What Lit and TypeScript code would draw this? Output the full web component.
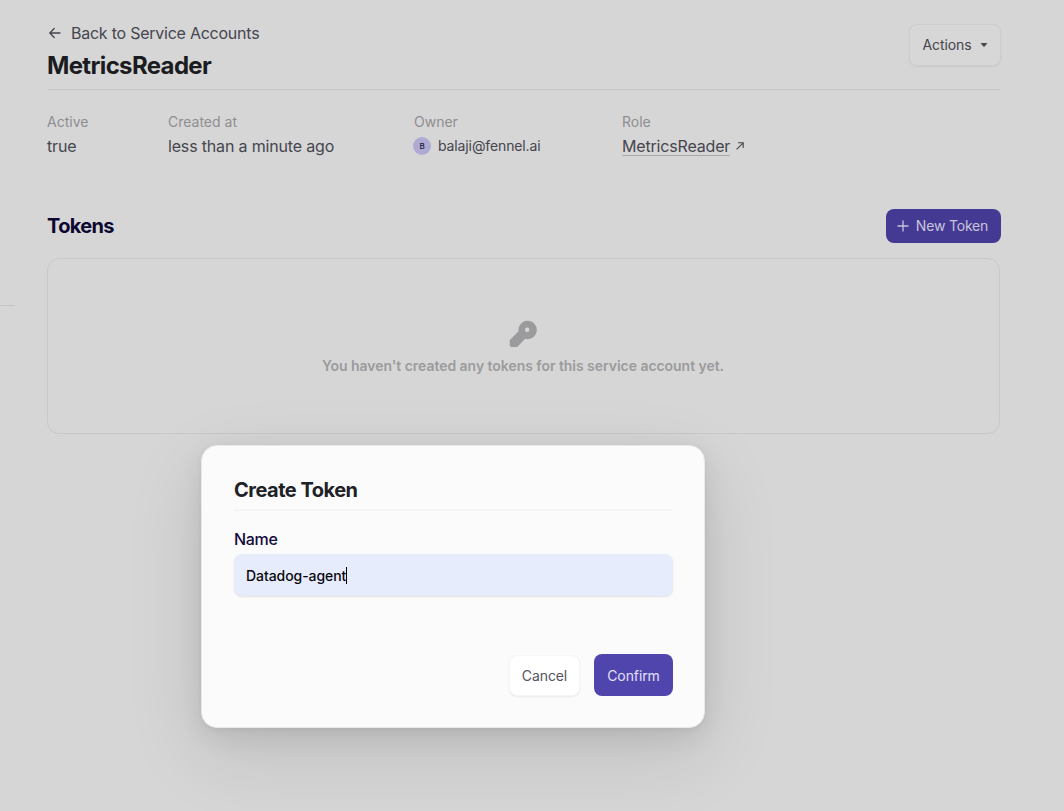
import { LitElement, html, css } from "lit";
import { customElement, property } from "lit/decorators.js";

@customElement("detail-field")
class DetailField extends LitElement {
  @property() label = "";
  static styles = css`
    :host { display: block; }
    .label { font-size: 14px; line-height: 20px; color: #8e8e91; }
    .value { display: flex; align-items: center; height: 24px; margin-top: 2px; font-size: 16px; letter-spacing: -0.17px; color: #45454e; white-space: nowrap; }
  `;
  render() {
    return html`<div class="label">${this.label}</div><div class="value"><slot></slot></div>`;
  }
}

@customElement("token-dialog")
class TokenDialog extends LitElement {
  static styles = css`
    :host { display: block; }
    .dialog {
      box-sizing: border-box; width: 504px; height: 283px; padding: 32px 31px 31px 32px;
      background: #fbfbfb; border-radius: 16px; border: 1px solid #e9e9e9;
      box-shadow: 0 25px 80px rgba(0, 0, 0, 0.11), 0 10px 30px rgba(0, 0, 0, 0.08), 0 2px 6px rgba(0, 0, 0, 0.05);
      display: flex; flex-direction: column;
    }
    h2 { margin: 0 1px 0 0; height: 31px; line-height: 24px; font-size: 20px; font-weight: 650; letter-spacing: -0.5px; color: #202127; border-bottom: 2px solid #f4f4f5; }
    label { margin: 17px 0 4px; line-height: 22px; font-size: 16px; font-weight: 500; color: #120b3b; letter-spacing: -0.3px; }
    .input {
      box-sizing: border-box; height: 42px; padding: 0 12px; display: flex; align-items: center;
      background: #e7ecfd; border: 1px solid #e8ebf8; border-radius: 8px; box-shadow: 0 1px 2px rgba(0, 0, 0, 0.1);
      font-size: 14px; font-weight: 500; letter-spacing: -0.07px; color: #08080c; text-indent: -1px;
    }
    .caret { width: 1px; height: 17px; background: #000; }
    .actions { margin-top: auto; display: flex; justify-content: flex-end; align-items: center; gap: 14px; height: 42px; }
    button { box-sizing: border-box; padding: 0; font: 420 14px Inter, sans-serif; border: 0; border-radius: 8px; }
    .cancel { width: 71px; height: 41px; background: #fff; color: #54545c; border: 1px solid #f5f5f6; box-shadow: 0 1px 2px rgba(0, 0, 0, 0.07); letter-spacing: -0.1px; }
    .confirm { width: 79px; height: 42px; background: #5044ad; color: #e4e1fb; letter-spacing: -0.1px; }
  `;
  render() {
    return html`
      <div class="dialog">
        <h2>Create Token</h2>
        <label>Name</label>
        <div class="input"><span>Datadog-agent</span><span class="caret"></span></div>
        <div class="actions">
          <button class="cancel">Cancel</button>
          <button class="confirm">Confirm</button>
        </div>
      </div>`;
  }
}

@customElement("app-root")
class AppRoot extends LitElement {
  static styles = css`
    :host {
      display: block; position: relative; width: 1064px; height: 811px; overflow: hidden;
      background: #d6d6d6; font-family: Inter, sans-serif; -webkit-font-smoothing: antialiased;
    }
    .layout { display: flex; height: 811px; }
    .rail { width: 15px; flex: none; padding-top: 305px; box-sizing: border-box; }
    .rail-line { height: 1px; background: #c5c5c6; }
    main { width: 954px; margin-left: 32px; padding-top: 22px; }
    header { display: flex; justify-content: space-between; height: 67px; border-bottom: 1px solid #c9c9ca; }
    .back { display: flex; align-items: center; gap: 8px; height: 22px; font-size: 16px; letter-spacing: -0.24px; color: #45454e; }
    h1 { margin: 6px 0 0; font-size: 24px; line-height: 32px; font-weight: 650; letter-spacing: -0.65px; color: #1b1c20; }
    svg { display: block; flex: none; }
    .menu {
      box-sizing: border-box; width: 92px; height: 42px; margin-top: 2px; display: flex; align-items: center; justify-content: center; gap: 8px;
      font: 420 14px Inter, sans-serif; letter-spacing: -0.08px; color: #45454e; background: #d7d7d7; border: 1px solid #cdcdce; border-radius: 8px; box-shadow: 0 1px 2px rgba(0, 0, 0, 0.06); padding: 0 0 1px;
    }
    .fields { display: grid; grid-template-columns: 121px 246px 208px auto; margin-top: 22px; height: 96px; }
    .avatar { width: 18px; height: 18px; margin: 0 7px 0 -1px; border-radius: 50%; background: #aeaad3; color: #1c1838; font-size: 8px; line-height: 18px; font-weight: 500; text-align: center; }
    .email { font-size: 14px; font-weight: 420; letter-spacing: -0.12px; padding-bottom: 1px; }
    .link { line-height: 18px; padding-top: 1px; border-bottom: 1px solid #a9a9ad; margin-right: 6px; }
    .section { display: flex; align-items: center; justify-content: space-between; height: 36px; }
    h3 { margin: 0; font-size: 20px; font-weight: 650; letter-spacing: -0.65px; color: #0d0830; }
    .new { width: 115px; height: 34px; padding: 0 2px 1px 0; box-sizing: border-box; display: flex; align-items: center; justify-content: center; gap: 7px; border: 0; border-radius: 8px; background: #453a93; color: #c8c5dc; font: 420 14px Inter, sans-serif; letter-spacing: -0.18px; }
    .empty {
      box-sizing: border-box; width: 953px; height: 176px; margin-top: 14px; border: 1px solid #c9c9ca; border-radius: 12px;
      display: flex; flex-direction: column; align-items: center; padding: 61px 1px 0 0;
      font-size: 14px; line-height: 20px; font-weight: 600; letter-spacing: -0.04px; color: #9b9b9d; gap: 8px;
    }
    token-dialog { position: absolute; left: 201px; top: 445.4px; }
  `;
  render() {
    return html`
      <div class="layout">
        <div class="rail"><div class="rail-line"></div></div>
        <main>
          <header>
            <div>
              <div class="back">
                <svg width="16" height="16" viewBox="0 0 16 16" fill="none" stroke="#45454e" stroke-width="1.3" stroke-linecap="round" stroke-linejoin="round"><path d="M13 8H3M7.2 3.5L2.8 8l4.4 4.5" /></svg>
                <span>Back to Service Accounts</span>
              </div>
              <h1>MetricsReader</h1>
            </div>
            <button class="menu">Actions
              <svg width="8" height="6" viewBox="0 0 8 6"><path d="M1.3 1.5h5.4L4 4.6z" fill="#45454e" stroke="#45454e" stroke-linejoin="round" /></svg>
            </button>
          </header>
          <section class="fields">
            <detail-field label="Active">true</detail-field>
            <detail-field label="Created at">less than a minute ago</detail-field>
            <detail-field label="Owner"><span class="avatar">B</span><span class="email">balaji@fennel.ai</span></detail-field>
            <detail-field label="Role"><span class="link">MetricsReader</span>
              <svg width="8" height="8" viewBox="0 0 8 8" fill="none" stroke="#45454e" stroke-width="1.1"><path d="M.6 7.4L7.2.8M2 .8h5.2V6" /></svg>
            </detail-field>
          </section>
          <div class="section">
            <h3>Tokens</h3>
            <button class="new">
              <svg width="12" height="12" viewBox="0 0 12 12" stroke="#c8c5dc" stroke-width="1.3" stroke-linecap="round"><path d="M6 1v10M1 6h10" /></svg>
              New Token
            </button>
          </div>
          <div class="empty">
            <svg width="28" height="28" viewBox="0 0 28 28"><path fill="#9b9b9d" fill-rule="evenodd" d="M18.5.7a9.2 9.2 0 1 1-2.3 18.1l-7.3 7.4c-.6.6-1.1.9-2 .9H2.8C1.6 27.1.7 26.2.7 25v-3.7c0-.9.3-1.5.9-2.1l8-7.9A9.2 9.2 0 0 1 18.500.7zM18.2 7.6a2.2 2.2 0 1 0 0 4.4 2.2 2.2 0 0 0 0-4.4z" /></svg>
            <span>You haven't created any tokens for this service account yet.</span>
          </div>
        </main>
      </div>
      <token-dialog></token-dialog>`;
  }
}
